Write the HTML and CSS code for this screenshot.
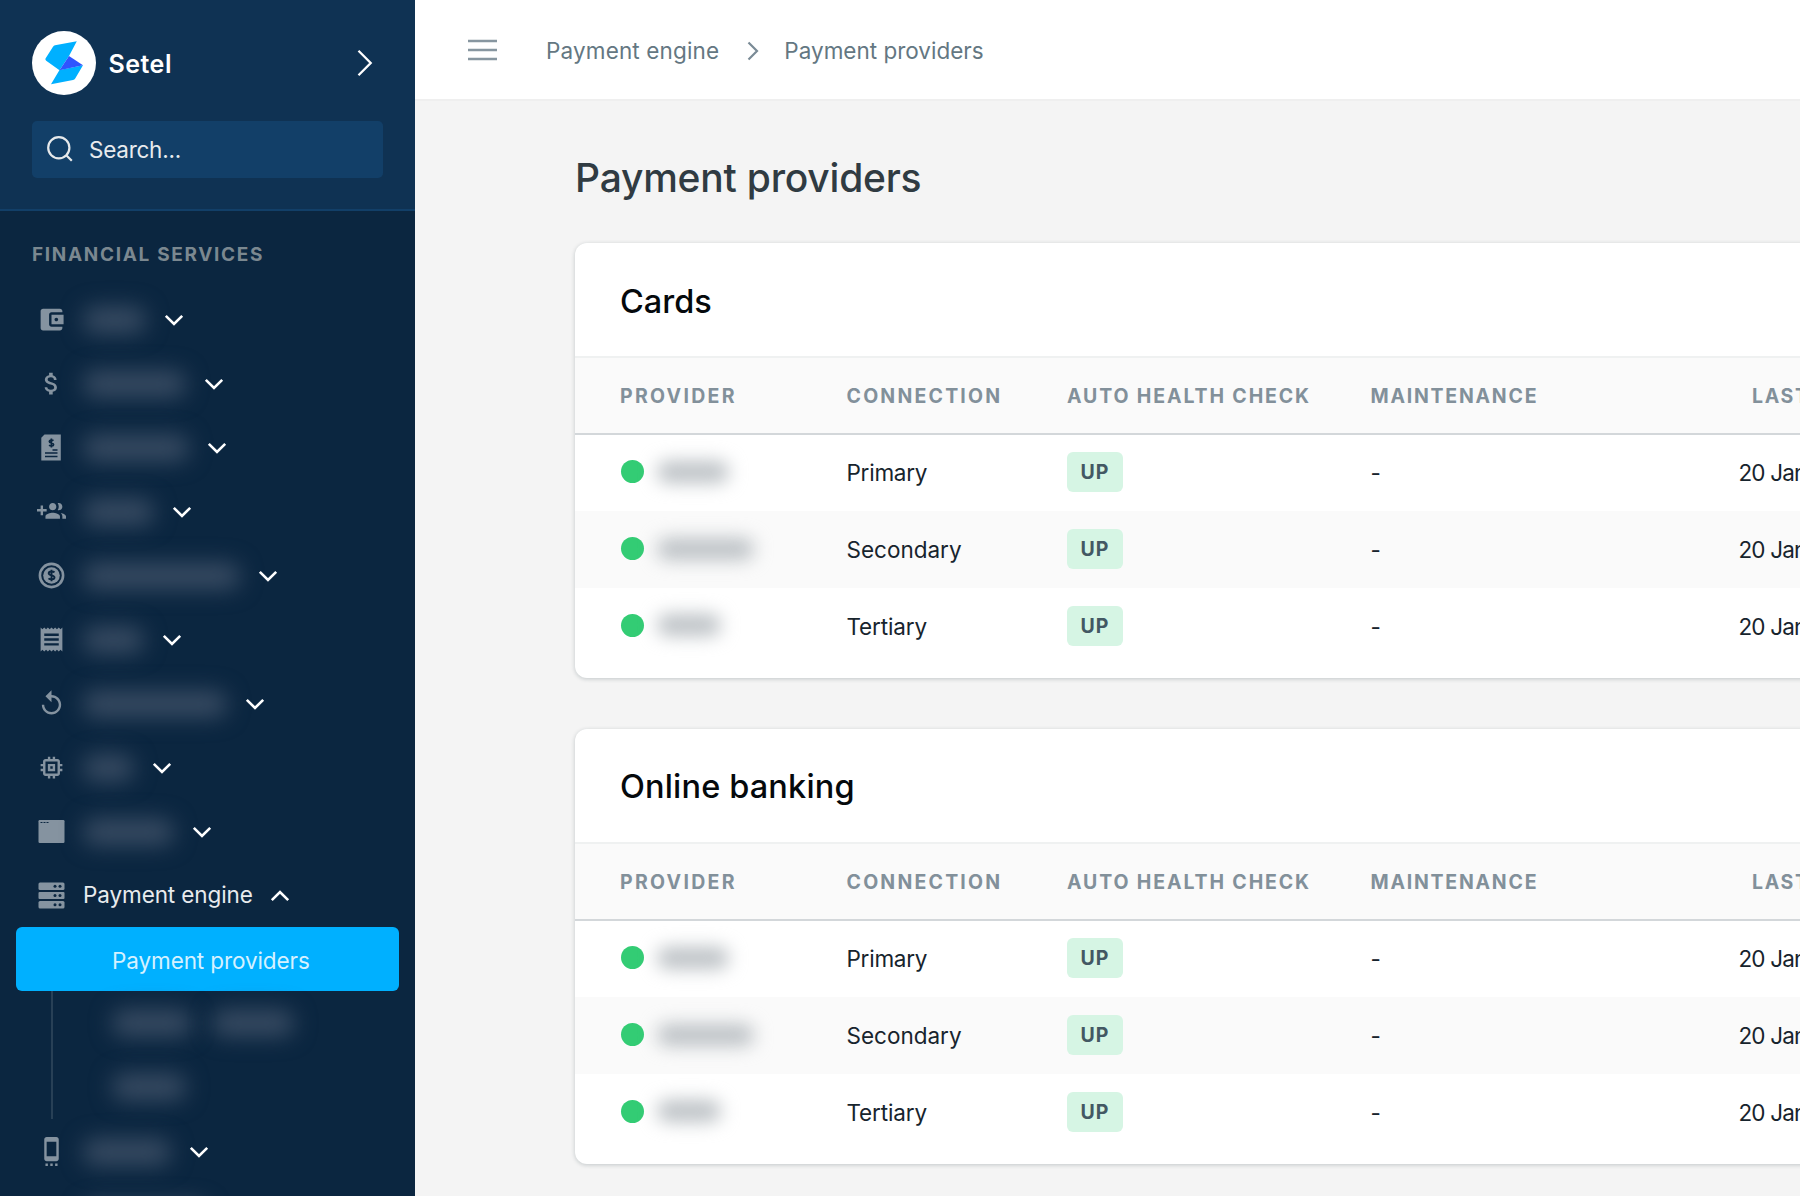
FILE: index.html
```html
<!DOCTYPE html>
<html lang="en">
<head>
<meta charset="utf-8">
<title>Payment providers</title>
<link rel="stylesheet" href="styles.css">
</head>
<body>
<svg class="defs" width="0" height="0" aria-hidden="true">
  <symbol id="down" viewBox="0 0 20 12"><path d="M1.8 1.8 10 10l8.200-8.200" fill="none" stroke="currentColor" stroke-width="2.600"/></symbol>
  <symbol id="up" viewBox="0 0 20 12"><path d="M1.800 10.200 10 2l8.200 8.200" fill="none" stroke="currentColor" stroke-width="2.600"/></symbol>
</svg>
<div class="app">
  <aside class="sidebar">
    <div class="brand-area">
      <div class="brand">
        <svg class="logo" viewBox="0 0 64 64"><circle cx="32" cy="32" r="32" fill="#fff"/><path d="M44.800 10.300 23 14.200Q21.800 14.400 21 15.800L13.500 27.600Q13 28.800 14.200 29.700L27.500 39.300 37 25Z" fill="#00b0ff"/><path d="M51 34.300 43.200 47.500Q42.500 48.700 41 49L19 53.200 27.500 39Z" fill="#00b0ff"/><path d="M37 25 51 34.300 27.500 39.300Z" fill="#2f54ff"/></svg>
        <span class="brand-name">Setel</span>
        <svg class="brand-arrow" viewBox="0 0 16 28"><path d="M1.500 1.800 13.700 14 1.500 26.200" fill="none" stroke="#fff" stroke-width="2.300"/></svg>
      </div>
      <div class="search">
        <svg class="search-icon" viewBox="0 0 26 26"><circle cx="11.800" cy="11.800" r="10.600"/><path d="m19.500 19.500 5.300 5.300"/></svg>
        <span>Search...</span>
      </div>
    </div>
    <nav>
      <h2 class="section">FINANCIAL SERVICES</h2>
      <div class="item"><svg class="icon" viewBox="0 0 24 24"><path d="M21 18v1c0 1.100-.9 2-2 2H5c-1.110 0-2-.9-2-2V5c0-1.100.89-2 2-2h14c1.100 0 2 .9 2 2v1h-9c-1.110 0-2 .9-2 2v8c0 1.100.89 2 2 2h9zm-9-2h10V8H12v8zm4-2.500c-.83 0-1.500-.67-1.500-1.500s.67-1.500 1.500-1.500 1.500.67 1.500 1.500-.67 1.500-1.500 1.500z"/></svg><i class="blurred" style="width:63px"></i><svg class="chev"><use href="#down"/></svg></div>
      <div class="item"><svg class="icon" viewBox="0 0 24 24"><path d="M11.800 10.900c-2.270-.59-3-1.200-3-2.150 0-1.090 1.010-1.850 2.700-1.850 1.780 0 2.440.85 2.500 2.100h2.210c-.07-1.720-1.120-3.300-3.210-3.810V3h-3v2.160c-1.940.42-3.500 1.680-3.500 3.610 0 2.310 1.910 3.460 4.700 4.130 2.500.6 3 1.480 3 2.410 0 .69-.49 1.790-2.700 1.790-2.060 0-2.870-.92-2.980-2.100h-2.200c.12 2.190 1.760 3.420 3.680 3.830V21h3v-2.150c1.950-.37 3.500-1.500 3.500-3.550 0-2.840-2.430-3.810-4.700-4.400z"/></svg><i class="blurred" style="width:103px"></i><svg class="chev"><use href="#down"/></svg></div>
      <div class="item"><svg class="icon" viewBox="0 0 29 29"><path d="M7.500 1.500h16.300v26H4.300V4.700z"/><g fill="none" stroke="#0b2640" stroke-width="1.700"><path d="M16.500 7.700c-1-1-4.200-1-4.200.8 0 2 4.300 1 4.300 3 0 1.900-3.300 1.800-4.500.7M14.400 5.500v9M15.500 17h5M8 20h12.500M8 23.500h12.500"/></g></svg><i class="blurred" style="width:106px"></i><svg class="chev"><use href="#down"/></svg></div>
      <div class="item"><svg class="icon" viewBox="0 0 24 24"><path d="M8 10H5V7H3v3H0v2h3v3h2v-3h3v-2zm10 1c1.660 0 2.990-1.340 2.990-3S19.660 5 18 5c-.32 0-.63.05-.91.14.57.81.9 1.790.9 2.860s-.34 2.040-.9 2.860c.28.09.59.14.91.14zm-5 0c1.660 0 2.990-1.340 2.990-3S14.660 5 13 5c-1.660 0-3 1.340-3 3s1.340 3 3 3zm6.620 2.160c.83.73 1.380 1.660 1.380 2.840v2h3v-2c0-1.540-2.370-2.490-4.380-2.840zM13 13c-2 0-6 1-6 3v2h12v-2c0-2-4-3-6-3z"/></svg><i class="blurred" style="width:71px"></i><svg class="chev"><use href="#down"/></svg></div>
      <div class="item"><svg class="icon" viewBox="0 0 29 29"><circle cx="14.500" cy="14.500" r="11.600" fill="none" stroke="currentColor" stroke-width="2.600"/><circle cx="14.500" cy="14.500" r="8.300"/><path d="M17.500 11.400c-1.300-1.400-5.800-1.300-5.800.9 0 2.600 5.800 1.500 5.800 4.200 0 2.300-4.500 2.300-6 .8M14.500 8.700v11.600" fill="none" stroke="#0b2640" stroke-width="1.900"/></svg><i class="blurred" style="width:157px"></i><svg class="chev"><use href="#down"/></svg></div>
      <div class="item"><svg class="icon" viewBox="0 0 24 24"><path d="M18 17H6v-2h12v2zm0-4H6v-2h12v2zm0-4H6V7h12v2zM3 22l1.500-1.500L6 22l1.500-1.500L9 22l1.500-1.500L12 22l1.500-1.500L15 22l1.500-1.500L18 22l1.500-1.500L21 22V2l-1.500 1.500L18 2l-1.500 1.500L15 2l-1.500 1.500L12 2l-1.500 1.500L9 2 7.500 3.500 6 2 4.500 3.500 3 2v20z"/></svg><i class="blurred" style="width:61px"></i><svg class="chev"><use href="#down"/></svg></div>
      <div class="item"><svg class="icon" viewBox="0 0 24 24"><path d="M12 5V1L7 6l5 5V7c3.310 0 6 2.690 6 6s-2.690 6-6 6-6-2.690-6-6H4c0 4.420 3.580 8 8 8s8-3.580 8-8-3.580-8-8-8z"/></svg><i class="blurred" style="width:144px"></i><svg class="chev"><use href="#down"/></svg></div>
      <div class="item"><svg class="icon" viewBox="0 0 24 24"><path d="M15 9H9v6h6V9zm-2 4h-2v-2h2v2zm8-2V9h-2V7c0-1.100-.9-2-2-2h-2V3h-2v2h-2V3H9v2H7c-1.100 0-2 .9-2 2v2H3v2h2v2H3v2h2v2c0 1.100.9 2 2 2h2v2h2v-2h2v2h2v-2h2c1.100 0 2-.9 2-2v-2h2v-2h-2v-2h2zm-4 6H7V7h10v10z"/></svg><i class="blurred" style="width:51px"></i><svg class="chev"><use href="#down"/></svg></div>
      <div class="item"><svg class="icon" viewBox="0 0 29 29"><rect x="1.500" y="3" width="26" height="23" rx="1.200"/><path d="M3.500 5.500h2M6.500 5.500h2M9.500 5.500h2" stroke="#0b2640" stroke-width="1.200"/></svg><i class="blurred" style="width:91px"></i><svg class="chev"><use href="#down"/></svg></div>
      <div class="item open"><svg class="icon" viewBox="0 0 29 29"><rect x="1.500" y="1.500" width="26" height="7.500" rx="1.500"/><rect x="1.500" y="11" width="26" height="7" rx="1"/><rect x="1.500" y="20" width="26" height="7.500" rx="1.500"/><g fill="#0b2640"><circle cx="18" cy="5.300" r="1.500"/><circle cx="23" cy="5.300" r="1.500"/><circle cx="18" cy="14.500" r="1.500"/><circle cx="23" cy="14.500" r="1.500"/><circle cx="18" cy="23.700" r="1.500"/><circle cx="23" cy="23.700" r="1.500"/></g></svg><span class="label">Payment engine</span><svg class="chev"><use href="#up"/></svg></div>
      <div class="active">Payment providers</div>
      <div class="children">
        <div class="child"><i class="blurred" style="width:80px"></i><i class="blurred" style="width:82px"></i></div>
        <div class="child"><i class="blurred" style="width:74px"></i></div>
      </div>
      <div class="item"><svg class="icon" viewBox="0 0 24 24"><path d="M7 24h2v-2H7v2zm4 0h2v-2h-2v2zm4 0h2v-2h-2v2zM16 .01L8 0C6.900 0 6 .9 6 2v16c0 1.100.9 2 2 2h8c1.100 0 2-.9 2-2V2c0-1.100-.9-1.990-2-1.990zM16 16H8V4h8v12z"/></svg><i class="blurred" style="width:88px"></i><svg class="chev"><use href="#down"/></svg></div>
      <div class="item"><span class="icon"></span><i class="blurred" style="width:125px"></i></div>
    </nav>
  </aside>
  <main>
    <header class="topbar">
      <svg class="menu" viewBox="0 0 29 22"><path d="M0 2h29M0 11h29M0 20h29" stroke="#8796a0" stroke-width="2.600"/></svg>
      <span class="crumb first">Payment engine</span>
      <svg class="crumb-arrow" viewBox="0 0 12 20"><path d="m1.500 1.500 8.500 8.500-8.500 8.500" fill="none" stroke="#7a8b96" stroke-width="2.200"/></svg>
      <span class="crumb">Payment providers</span>
    </header>
    <div class="content">
      <h1>Payment providers</h1>
      <section class="card">
        <h3 class="cards-title">Cards</h3>
        <div class="row head"><span class="c1">PROVIDER</span><span class="c2">CONNECTION</span><span class="c3">AUTO HEALTH CHECK</span><span class="c4">MAINTENANCE</span><span class="last">LAST</span></div>
        <div class="row"><span class="provider"><b class="dot"></b><i class="blurred" style="width:72px"></i></span><span class="primary">Primary</span><span class="up">UP</span><span>-</span><span class="date">20 Jan</span></div>
        <div class="row striped"><span class="provider"><b class="dot"></b><i class="blurred" style="width:97px"></i></span><span class="secondary">Secondary</span><span class="up">UP</span><span>-</span><span class="date">20 Jan</span></div>
        <div class="row"><span class="provider"><b class="dot"></b><i class="blurred" style="width:64px"></i></span><span class="tertiary">Tertiary</span><span class="up">UP</span><span>-</span><span class="date">20 Jan</span></div>
      </section>
      <section class="card">
        <h3 class="bank-title">Online banking</h3>
        <div class="row head"><span class="c1">PROVIDER</span><span class="c2">CONNECTION</span><span class="c3">AUTO HEALTH CHECK</span><span class="c4">MAINTENANCE</span><span class="last">LAST</span></div>
        <div class="row"><span class="provider"><b class="dot"></b><i class="blurred" style="width:72px"></i></span><span class="primary">Primary</span><span class="up">UP</span><span>-</span><span class="date">20 Jan</span></div>
        <div class="row striped"><span class="provider"><b class="dot"></b><i class="blurred" style="width:97px"></i></span><span class="secondary">Secondary</span><span class="up">UP</span><span>-</span><span class="date">20 Jan</span></div>
        <div class="row"><span class="provider"><b class="dot"></b><i class="blurred" style="width:64px"></i></span><span class="tertiary">Tertiary</span><span class="up">UP</span><span>-</span><span class="date">20 Jan</span></div>
      </section>
    </div>
  </main>
</div>
</body>
</html>
```
FILE: styles.css
```css
* { box-sizing: border-box; }
body { margin: 0; font-family: Inter, "Liberation Sans", sans-serif; font-size: 22.5px; line-height: 1.3; color: #17242d; overflow: hidden; }
h1, h2, h3 { margin: 0; }
svg { display: block; flex: none; }
.defs { display: none; }
.app { display: flex; height: 1196px; overflow: hidden; }

.sidebar { width: 415px; flex: none; background: #0b2640; color: #e8ebee; overflow: hidden; }
.brand-area { height: 211px; padding: 31px 32px 0; background: #0f3253; border-bottom: 2px solid #123f68; }
.brand { display: flex; align-items: center; height: 64px; }
.logo { width: 64px; height: 64px; }
.brand-name { margin: 2px 0 0 12.5px; font-size: 25px; font-weight: 600; letter-spacing: .5px; color: #fff; }
.brand-arrow { width: 16px; height: 28px; margin: 0 10px 0 auto; }
.search { display: flex; align-items: center; gap: 16px; height: 57px; margin-top: 26px; padding-left: 15px; border-radius: 5px; background: #123f68; letter-spacing: -.25px; }
.search-icon { width: 26px; height: 26px; margin-top: -2px; fill: none; stroke: #e6e9eb; stroke-width: 2.2; }
.section { height: 76px; padding: 32px 0 0 32px; font-size: 19px; line-height: 24px; font-weight: 700; letter-spacing: 1.67px; color: #7b8890; white-space: nowrap; }
.item { display: flex; align-items: center; height: 64px; padding-left: 37px; }
.icon { width: 29px; height: 29px; margin: 0 17px 0 0; flex: none; fill: currentColor; color: #8593a0; }
.chev { width: 20px; height: 12px; margin: 2px 0 0 18px; color: #fff; }
.label { white-space: nowrap; letter-spacing: -.1px; }
.open .chev { margin-left: 17px; }
.blurred { display: block; flex: none; height: 26px; border-radius: 12px; background: #394c63; filter: blur(11px); margin-top: 2px; }
.active { height: 64px; margin: 0 16px; padding: 3px 0 0 96px; border-radius: 6px; background: #00b0ff; color: #d5f1ff; line-height: 62px; letter-spacing: -.1px; }
.children { margin-left: 51px; border-left: 2px solid #284056; }
.child { display: flex; align-items: center; gap: 20px; height: 64px; padding-left: 59px; }
.child .blurred { margin-top: -1px; }

main { flex: 1; min-width: 0; background: #f4f4f4; overflow: hidden; }
.topbar { display: flex; align-items: center; height: 101px; padding: 0 0 0 53px; background: #fff; border-bottom: 2px solid #efefef; color: #647782; }
.menu { width: 29px; height: 22px; margin-top: 1px; }
.crumb { margin-top: 2px; white-space: nowrap; }
.first { margin-left: 49px; letter-spacing: .15px; }
.crumb-arrow { width: 12px; height: 20px; margin: 3px 25px 0 28px; }
.content { width: 1385px; padding: 46px 0 0 160px; }
h1 { height: 96px; font-size: 39px; line-height: 61px; font-weight: 500; letter-spacing: -.22px; color: #303b42; white-space: nowrap; }
.card { width: 1500px; height: 435px; margin-bottom: 51px; border-radius: 12px; background: #fff; box-shadow: 0 1px 4px rgba(20, 40, 50, .22); overflow: hidden; }
h3 { height: 115px; padding-left: 45px; border-bottom: 2px solid #eff1f1; font-size: 32.5px; line-height: 117px; font-weight: 500; color: #05090c; }
.bank-title { letter-spacing: .15px; line-height: 115px; }
.row { display: grid; grid-template-columns: 226.5px 220.5px 303.5px 368px 1fr; align-items: center; height: 76.7px; padding-left: 45px; white-space: nowrap; }
.head { height: 76.5px; padding-top: 3px; background: #fafafa; border-bottom: 2px solid #d3d7da; font-size: 19.5px; font-weight: 700; letter-spacing: 1.65px; color: #82909a; }
.c1 { letter-spacing: 2.3px; }
.c2 { letter-spacing: 2.2px; }
.c3 { letter-spacing: 1.87px; }
.c4 { letter-spacing: 1.75px; }
.striped { background: #fafafa; }
.provider { display: flex; align-items: center; gap: 13px; margin-top: -2px; }
.provider .blurred { height: 22px; margin: 0; background: #bcc1c5; filter: blur(9px); }
.dot { width: 23px; height: 23px; margin-left: 1px; border-radius: 50%; background: #33cc74; }
.primary { letter-spacing: -.25px; }
.tertiary { letter-spacing: -.15px; }
.up { justify-self: start; width: 56px; height: 40px; margin-top: -1px; border-radius: 6px; background: #d6f5e4; color: #435863; font-size: 19.5px; line-height: 40px; font-weight: 700; letter-spacing: 1px; text-align: center; }
.last { margin-left: 13.5px; }
.date { letter-spacing: -.85px; }
```
